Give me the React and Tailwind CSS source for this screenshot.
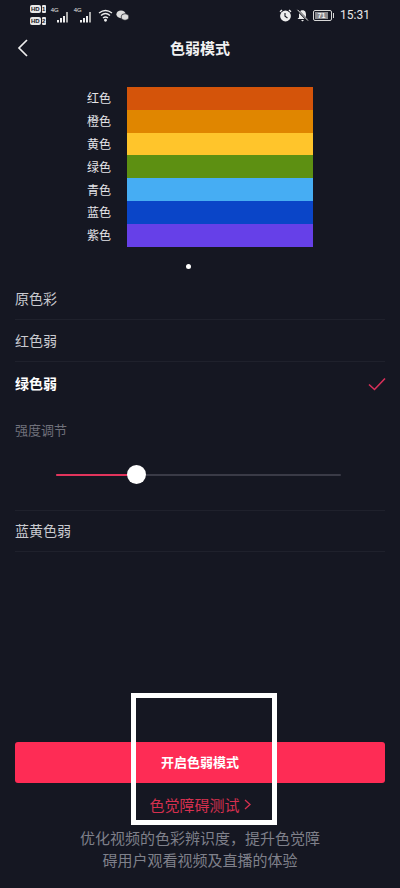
import React from 'react';

const bands = [
  { label: '红色', color: 'bg-[#d4540a]' },
  { label: '橙色', color: 'bg-[#e08600]' },
  { label: '黄色', color: 'bg-[#ffc52b]' },
  { label: '绿色', color: 'bg-[#5d9012]' },
  { label: '青色', color: 'bg-[#46adf3]' },
  { label: '蓝色', color: 'bg-[#0a45c8]' },
  { label: '紫色', color: 'bg-[#6640e8]' },
];

const HdBadge = ({ n }) => (
  <div className="flex items-center gap-px h-[8px]">
    <span className="bg-[#e8e8e8] text-[#15171f] text-[6px] font-bold leading-[8px] px-px rounded-[2px] font-['Liberation_Sans',sans-serif]">HD</span>
    <span className="bg-[#e8e8e8] text-[#15171f] text-[6px] font-bold leading-[8px] w-[4px] text-center rounded-[1px] font-['Liberation_Sans',sans-serif]">{n}</span>
  </div>
);

const Signal = () => (
  <div className="relative w-[19px] h-[16px]">
    <span className="absolute left-0 top-0 text-[6px] leading-[7px] text-[#e8e8e8] font-['Liberation_Sans',sans-serif]">4G</span>
    <svg className="absolute left-[6px] bottom-0" width="13" height="12" viewBox="0 0 13 12">
      <rect x="0" y="9" width="2" height="2.5" fill="#eee" />
      <rect x="3" y="7" width="2" height="4.5" fill="#eee" />
      <rect x="6" y="5" width="2" height="6.5" fill="#eee" />
      <rect x="9" y="1" width="2" height="10.5" fill="#aaa" />
    </svg>
  </div>
);

const StatusBar = () => (
  <div className="h-[28px] flex items-center pl-[30px] pr-[30px] pt-[2px]">
    <div className="flex flex-col gap-[4px] mr-[5px]">
      <HdBadge n="1" />
      <HdBadge n="2" />
    </div>
    <div className="flex gap-[4px] mr-[5px]">
      <Signal />
      <Signal />
    </div>
    <svg className="mr-[3px]" width="15" height="13" viewBox="0 0 15 13" fill="none" stroke="#eee" strokeWidth="1.3">
      <path d="M1 4 Q7.5 -1 14 4" />
      <path d="M3 6.5 Q7.5 2.5 12 6.5" />
      <path d="M5 9 Q7.5 7 10 9" />
      <circle cx="7.5" cy="11.3" r="0.8" fill="#eee" />
    </svg>
    <svg width="13" height="11" viewBox="0 0 13 11" fill="#ddd">
      <ellipse cx="5" cy="4.3" rx="4.6" ry="3.9" />
      <ellipse cx="9" cy="7" rx="3.9" ry="3.3" stroke="#15171f" strokeWidth="0.7" />
    </svg>
    <div className="ml-auto flex items-center">
      <svg className="mr-[4px]" width="13" height="13" viewBox="0 0 13 13">
        <circle cx="6.5" cy="7" r="5.4" fill="#eee" />
        <path d="M1 2.8 L3 1 M12 2.8 L10 1" stroke="#eee" strokeWidth="1.4" />
        <path d="M6 4 V7.3 L8.5 9" stroke="#15171f" strokeWidth="1.1" fill="none" />
      </svg>
      <svg className="mr-[4px]" width="13" height="13" viewBox="0 0 13 13">
        <path d="M6.5 1.2 C3.8 1.2 3 3.4 3 5.5 V8.5 L1.5 10 H11.5 L10 8.5 V5.5 C10 3.4 9.2 1.2 6.5 1.2 Z" fill="#eee" />
        <path d="M5 11 H8 L6.5 12.5 Z" fill="#eee" />
        <path d="M1.5 1 L12 12" stroke="#15171f" strokeWidth="2.2" />
        <path d="M1.5 0.8 L12 11.6" stroke="#eee" strokeWidth="1" />
      </svg>
      <div className="flex items-center mr-[6px]">
        <div className="w-[19px] h-[11px] border border-[#d8d8d8] rounded-[2px] p-px flex">
          <div className="w-[13px] bg-[#8a8a8e] text-[#f2f2f2] text-[7px] leading-[7px] font-bold font-['Liberation_Sans',sans-serif] text-center">71</div>
        </div>
        <div className="w-px h-[5px] bg-[#d8d8d8] ml-px" />
      </div>
      <span className="text-[12px] leading-[14px] text-[#e8e8e8] font-['Roboto',sans-serif]">15:31</span>
    </div>
  </div>
);

const Row = ({ children, selected, height }) => (
  <div className={`flex items-center justify-between ${height}`}>
    <span className={selected ? 'text-[14px] font-bold text-white' : 'text-[14px] text-[#c9cad0]'}>{children}</span>
    {selected && (
      <svg width="18" height="14" viewBox="0 0 18 14" fill="none" stroke="#d9305a" strokeWidth="1.6" className="-mr-px">
        <path d="M1 7.5 L6.5 12.5 L17 1.5" />
      </svg>
    )}
  </div>
);

export default function App() {
  return (
    <div className="relative w-[400px] h-[888px] overflow-hidden bg-[#151722] font-['Noto_Sans_CJK_SC',sans-serif]">
      <StatusBar />

      <div className="relative h-[40px] flex items-center justify-center">
        <svg className="absolute left-[17px] top-[11px]" width="11" height="18" viewBox="0 0 11 18" fill="none" stroke="#eee" strokeWidth="1.7">
          <path d="M10 1 L2 9 L10 17" />
        </svg>
        <span className="text-[15px] font-bold text-[#f2f2f2]">色弱模式</span>
      </div>

      <div className="mt-[19px] flex justify-start pl-[87px]">
        <div className="w-[30px] mr-[10px] flex flex-col">
          {bands.map((b) => (
            <div key={b.label} className="h-[22.8px] flex items-center text-[12px] text-[#e4e4e8] whitespace-nowrap">{b.label}</div>
          ))}
        </div>
        <div className="w-[186px] flex flex-col">
          {bands.map((b) => (
            <div key={b.label} className={`h-[22.8px] ${b.color}`} />
          ))}
        </div>
      </div>

      <div className="mt-[17px] flex justify-center pr-[24px]">
        <div className="w-[5px] h-[5px] rounded-full bg-white" />
      </div>

      <div className="mt-[10px] mx-[15px]">
        <Row height="h-[42px] -mt-[1px] border-b border-[#1f212c]">原色彩</Row>
        <Row height="h-[42px] border-b border-[#1f212c]">红色弱</Row>
        <Row selected height="h-[44px]">绿色弱</Row>

        <div className="mt-[14px] text-[13px] leading-[20px] text-[#70717b]">强度调节</div>

        <div className="relative mt-[34px] ml-[41px] w-[285px] h-[2px] bg-[#3a3b47] rounded-full">
          <div className="h-[2px] w-[81px] bg-[#e2345c] rounded-full" />
          <div className="absolute left-[71px] top-[-8.5px] w-[19px] h-[19px] rounded-full bg-white" />
        </div>

        <div className="mt-[34px] border-t border-[#1f212c]">
          <Row height="h-[41px] border-b border-[#1f212c]">蓝黄色弱</Row>
        </div>
      </div>

      <div className="mt-[190px] mx-[15px]">
        <div className="h-[41px] rounded-[3px] bg-[#fe2c55] flex items-center justify-center text-[13px] font-bold text-white">
          开启色弱模式
        </div>
        <div className="mt-[11px] h-[22px] flex items-center justify-center text-[15px] leading-[22px] text-[#d5304f] pr-[0px]">
          色觉障碍测试
          <svg className="ml-[4px]" width="7" height="11" viewBox="0 0 7 11" fill="none" stroke="#d5304f" strokeWidth="1.3">
            <path d="M1 1 L6 5.5 L1 10" />
          </svg>
        </div>
        <div className="mt-[11px] text-center text-[15px] leading-[22px] text-[#7f808a]">
          优化视频的色彩辨识度，提升色觉障<br />碍用户观看视频及直播的体验
        </div>
      </div>

      {/* highlight box drawn over the screenshot */}
      <div className="absolute left-[131px] top-[693px] w-[146px] h-[132px] border-[5px] border-white" />
    </div>
  );
}
